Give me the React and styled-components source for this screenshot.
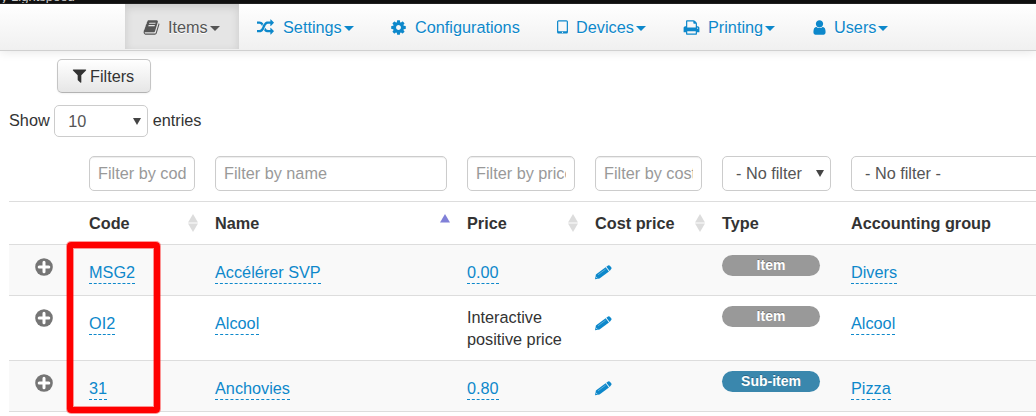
import React from 'react';
import styled, { createGlobalStyle, css } from 'styled-components';

const Global = createGlobalStyle`
  * { box-sizing: border-box; }
  body {
    margin: 0;
    background: #fff;
    color: #333;
    font: 16.25px/22px "Liberation Sans", Arial, sans-serif;
    overflow: hidden;
  }
`;

const paths = {
  book: 'M1703 478q40 57 18 129l-275 906q-19 64-76.5 107.5t-122.5 43.5h-923q-77 0-148.5-53.5t-99.5-131.5q-24-67-2-127 0-4 3-27t4-37q1-8-3-21.5t-3-19.5q2-11 8-21t16.5-23.5 16.5-23.5q23-38 45-91.5t30-91.5q3-10 .5-30t-.5-28q3-11 17-28t17-23q21-36 42-92t25-90q1-9-2.5-32t.5-28q4-13 22-30.5t22-22.5q19-26 42.5-84.5t27.5-96.5q1-8-3-25.5t-2-26.5q2-8 9-18t18-23 17-21q8-12 16.5-30.5t15-35 16-36 19.5-32 26.5-23.5 36-11.5 47.5 5.5l-1 3q38-9 51-9h761q74 0 114 56t18 130l-274 906q-36 119-71.5 153.5t-128.5 34.5h-869q-27 0-38 15-11 16-1 43 24 70 144 70h923q29 0 56-15.5t35-41.5l300-987q7-22 5-57 38 15 59 43zm-1064 2q-4 13 2 22.5t20 9.5h608q13 0 25.5-9.5t16.5-22.5l21-64q4-13-2-22.5t-20-9.5h-608q-13 0-25.5 9.5t-16.5 22.5zm-83 256q-4 13 2 22.5t20 9.5h608q13 0 25.5-9.5t16.5-22.5l21-64q4-13-2-22.5t-20-9.5h-608q-13 0-25.5 9.5t-16.5 22.5z',
  random: 'M666 481q-60 92-137 273-22-45-37-72.5t-40.5-63.5-51-56.5-63-35-81.5-14.5h-224q-14 0-23-9t-9-23v-192q0-14 9-23t23-9h224q250 0 410 225zm1126 799q0 14-9 23l-320 320q-9 9-23 9-13 0-22.5-9.5t-9.5-22.5v-192q-32 0-85 .5t-81 1-73-1-71-5-64-10.5-63-18.5-58-28.5-59-40-55-53.5-56-69.5q59-93 136-273 22 45 37 72.5t40.5 63.5 51 56.5 63 35 81.5 14.5h256v-192q0-14 9-23t23-9q12 0 24 10l319 319q9 9 9 23zm0-896q0 14-9 23l-320 320q-9 9-23 9-13 0-22.5-9.5t-9.5-22.5v-192h-256q-48 0-87 15t-69 45-51 61.5-45 77.5q-32 62-78 171-29 66-49.5 111t-54 105-64 100-74 83-90 68.5-106.5 42-128 16.5h-224q-14 0-23-9t-9-23v-192q0-14 9-23t23-9h224q48 0 87-15t69-45 51-61.5 45-77.5q32-62 78-171 29-66 49.5-111t54-105 64-100 74-83 90-68.5 106.5-42 128-16.5h256v-192q0-14 9-23t23-9q12 0 24 10l319 319q9 9 9 23z',
  cog: 'M1152 896q0-106-75-181t-181-75-181 75-75 181 75 181 181 75 181-75 75-181zm512-109v222q0 12-8 23t-20 13l-185 28q-19 54-39 91 35 50 107 138 10 12 10 25t-9 23q-27 37-99 108t-94 71q-12 0-26-9l-138-108q-44 23-91 38-16 136-29 186-7 28-36 28h-222q-14 0-24.5-8.5t-11.5-21.5l-28-184q-49-16-90-37l-141 107q-10 9-25 9-14 0-25-11-126-114-165-168-7-10-7-23 0-12 8-23 15-21 51-66.5t54-70.5q-27-50-41-99l-183-27q-13-2-21-12.5t-8-23.5v-222q0-12 8-23t19-13l186-28q14-46 39-92-40-57-107-138-10-12-10-24 0-10 9-23 26-36 98.5-107.5t94.5-71.5q13 0 26 10l138 107q44-23 91-38 16-136 29-186 7-28 36-28h222q14 0 24.5 8.5t11.5 21.5l28 184q49 16 90 37l142-107q9-9 24-9 13 0 25 10 129 119 165 170 7 8 7 22 0 12-8 23-15 21-51 66.5t-54 70.5q26 50 41 98l183 28q13 2 21 12.5t8 23.5z',
  tablet: 'M960 1408q0-26-19-45t-45-19-45 19-19 45 19 45 45 19 45-19 19-45zm384-160v-960q0-13-9.5-22.5t-22.5-9.5h-832q-13 0-22.5 9.5t-9.5 22.5v960q0 13 9.5 22.5t22.5 9.5h832q13 0 22.5-9.5t9.5-22.5zm128-960v1088q0 66-47 113t-113 47h-832q-66 0-113-47t-47-113v-1088q0-66 47-113t113-47h832q66 0 113 47t47 113z',
  print: 'M448 1536h896v-256h-896v256zm0-640h896v-384h-160q-40 0-68-28t-28-68v-160h-640v640zm1152 64q0-26-19-45t-45-19-45 19-19 45 19 45 45 19 45-19 19-45zm128 0v416q0 13-9.5 22.5t-22.5 9.5h-224v160q0 40-28 68t-68 28h-960q-40 0-68-28t-28-68v-160h-224q-13 0-22.5-9.5t-9.5-22.5v-416q0-79 56.5-135.5t135.5-56.5h64v-544q0-40 28-68t68-28h672q40 0 88 20t76 48l152 152q28 28 48 76t20 88v256h64q79 0 135.5 56.5t56.5 135.5z',
  user: 'M1536 1399q0 109-62.5 187t-150.5 78h-854q-88 0-150.5-78t-62.5-187q0-85 8.5-160.5t31.5-152 58.5-131 94-89 134.5-34.5q131 128 313 128t313-128q76 0 134.5 34.5t94 89 58.5 131 31.5 152 8.5 160.5zm-256-887q0 159-112.5 271.5t-271.5 112.5-271.5-112.5-112.5-271.5 112.5-271.5 271.5-112.5 271.5 112.5 112.5 271.5z',
  filter: 'M1595 295q17 41-14 70l-493 493v742q0 42-39 59-13 5-25 5-27 0-45-19l-256-256q-19-19-19-45v-486l-493-493q-31-29-14-70 17-39 59-39h1280q42 0 59 39z',
};

const Icon = styled.svg.attrs({ viewBox: '0 0 1792 1792' })`
  width: 17px;
  height: 17px;
  fill: currentColor;
  flex: none;
`;
const Glyph = ({ name }) => <Icon><path d={paths[name]} /></Icon>;

const Page = styled.div`width: 1036px; height: 416px; overflow: hidden;`;

const TopBar = styled.div`
  height: 4px;
  background: #111;
  border-bottom: 1px solid #222;
  color: #ccc;
  overflow: hidden;
  font-size: 13px;
  line-height: 16px;
  display: flex;
  align-items: flex-end;
`;

const TopText = styled.span`margin: 0 0 -2px 1px;`;

const NavBar = styled.nav`
  display: flex;
  height: 47px;
  padding-left: 125px;
  background: linear-gradient(#fff, #f0f0f0);
  border-bottom: 1px solid #d0d0d0;
  box-shadow: 0 1px 10px rgba(0, 0, 0, 0.1);
`;

const NavItem = styled.a`
  display: flex;
  align-items: center;
  height: 45px;
  width: ${(p) => p.$w}px;
  padding: 1px 0 0 18px;
  color: #0d88cb;
  text-shadow: 0 1px 0 #fff;
  ${(p) => p.$active && css`
    color: #555;
    background: #e5e5e5;
    box-shadow: inset 0 3px 8px rgba(0, 0, 0, 0.125);
  `}
`;

const NavLabel = styled.span`
  margin-left: ${(p) => p.$gap}px;
  padding-bottom: 1px;
`;

const Caret = styled.i`
  margin: 2px 0 0 2px;
  border: 5px solid transparent;
  border-top-color: currentColor;
  border-bottom: 0;
`;

const FilterButton = styled.button`
  display: flex;
  align-items: center;
  gap: 2px;
  width: 94px;
  height: 34px;
  margin: 8px 0 0 57px;
  padding: 0 0 1px 13px;
  border: 1px solid #c5c5c5;
  border-bottom-color: #b3b3b3;
  border-radius: 5px;
  background: linear-gradient(#fff, #e6e6e6);
  box-shadow: 0 1px 2px rgba(0, 0, 0, 0.05);
  color: #333;
  font: inherit;
`;

const LengthRow = styled.div`
  display: flex;
  align-items: center;
  gap: 4.5px;
  height: 32px;
  margin: 12px 0 0 9px;
`;

const LengthLabel = styled.span`padding-bottom: 2px;`;

const Box = styled.div`
  display: flex;
  align-items: center;
  height: ${(p) => p.$h ?? 35}px;
  width: ${(p) => p.$w}px;
  padding: 0 ${(p) => (p.$select ? '6px 0 13px' : '8px')};
  border: 1px solid #ccc;
  border-radius: 5px;
  background: #fff;
  color: ${(p) => (p.$select ? '#555' : '#999')};
  ${(p) => !p.$select && css`box-shadow: inset 0 1px 1px rgba(0, 0, 0, 0.075);`}
`;

const BoxText = styled.span`
  flex: 1;
  min-width: 0;
  overflow: hidden;
  white-space: nowrap;
  padding-bottom: ${(p) => p.$lift ?? 2}px;
`;

const DropMark = styled.i`
  border: solid transparent;
  border-width: 7px 4px 0;
  border-top-color: #444;
`;

const Table = styled.div`margin: 19px 0 0 9px; width: 1080px;`;

const Row = styled.div`
  display: grid;
  grid-template-columns: 80px 126px 252px 128px 127px 129px 238px;
  height: ${(p) => p.$h}px;
  border-bottom: 1px solid #ddd;
  background: ${(p) => (p.$odd ? '#f9f9f9' : '#fff')};
`;

const HeadCell = styled.div`
  position: relative;
  padding-top: 10px;
  font-weight: bold;
`;

const Sorter = styled.svg`
  position: absolute;
  top: 12px;
  right: 17px;
  width: 10px;
  height: 18px;
`;

const Cell = styled.div`padding-top: ${(p) => p.$top}px;`;

const Link = styled.a`
  display: inline-block;
  height: 23px;
  color: #0d88cb;
  border-bottom: 1px dashed #0d88cb;
`;

const PlusIcon = styled.svg`
  display: block;
  width: 18px;
  height: 18px;
  margin-left: 26px;
`;

const PencilIcon = styled.svg`
  display: block;
  width: 17px;
  height: 15px;
`;

const Badge = styled.div`
  width: 98px;
  height: 21px;
  border-radius: 11px;
  background: ${(p) => (p.$sub ? '#3a87ad' : '#999')};
  color: #fff;
  font-size: 14px;
  font-weight: bold;
  line-height: 20px;
  text-align: center;
  text-shadow: 0 -1px 0 rgba(0, 0, 0, 0.25);
`;

const Annotation = styled.div`
  position: absolute;
  left: 67px;
  top: 242px;
  width: 93px;
  height: 171px;
  border: 6px solid #f00;
  border-radius: 4px;
  box-shadow: 0 0 0 1px rgba(255, 0, 0, 0.4), inset 0 0 0 1px rgba(255, 0, 0, 0.4);
`;

const nav = [
  { icon: 'book', label: 'Items', w: 114, gap: 8, caret: true, active: true },
  { icon: 'random', label: 'Settings', w: 133, gap: 9, caret: true },
  { icon: 'cog', label: 'Configurations', w: 164, gap: 8 },
  { icon: 'tablet', label: 'Devices', w: 129, gap: 5, caret: true },
  { icon: 'print', label: 'Printing', w: 128, gap: 8, caret: true },
  { icon: 'user', label: 'Users', w: 120, gap: 6, caret: true },
];

const columns = [
  { label: 'Code', sort: 'both' },
  { label: 'Name', sort: 'asc' },
  { label: 'Price', sort: 'both' },
  { label: 'Cost price', sort: 'both' },
  { label: 'Type' },
  { label: 'Accounting group' },
];

const items = [
  { code: 'MSG2', name: 'Accélérer SVP', price: '0.00', type: 'Item', group: 'Divers', h: 51 },
  { code: 'OI2', name: 'Alcool', note: 'Interactive positive price', type: 'Item', group: 'Alcool', h: 65 },
  { code: '31', name: 'Anchovies', price: '0.80', type: 'Sub-item', group: 'Pizza', h: 51 },
];

const Plus = () => (
  <PlusIcon viewBox="0 0 18 18">
    <circle cx="9" cy="9" r="8.8" fill="#757575" />
    <path d="M9 4.2v9.6M4.2 9h9.6" stroke="#fff" strokeWidth="3" strokeLinecap="round" />
  </PlusIcon>
);

const Pencil = () => (
  <PencilIcon viewBox="0 0 17 15">
    <path d="M0 14.3l.9-4.9L10.6 2.2l3.4 4.3L4.500 13.600z" fill="#0d88cb" />
    <path d="M11.300 1.700l1.800-1.300q1-.6 1.800.3l1.300 1.600q.8 1.100-.2 1.900L14.700 5.900z" fill="#0d88cb" />
    <path d="M3 9.800l7.600-5.600" stroke="#fff" strokeWidth=".6" opacity=".55" />
    <path d="M1 11.800l1.300 1.500" stroke="#fff" strokeWidth=".6" />
  </PencilIcon>
);

export default function App() {
  return (
    <Page>
      <Global />
      <TopBar><TopText>y Lightspeed</TopText></TopBar>
      <NavBar>
        {nav.map((n) => (
          <NavItem key={n.label} $w={n.w} $active={n.active}>
            <Glyph name={n.icon} />
            <NavLabel $gap={n.gap}>{n.label}</NavLabel>
            {n.caret && <Caret />}
          </NavItem>
        ))}
      </NavBar>
      <FilterButton><Glyph name="filter" />Filters</FilterButton>
      <LengthRow>
        <LengthLabel>Show</LengthLabel>
        <Box $select $w={94} $h={32}><BoxText $lift={0}>10</BoxText><DropMark /></Box>
        <LengthLabel>entries</LengthLabel>
      </LengthRow>
      <Table>
        <Row $h={46}>
          <div />
          <Box $w={106}><BoxText>Filter by cod</BoxText></Box>
          <Box $w={232}><BoxText>Filter by name</BoxText></Box>
          <Box $w={108}><BoxText>Filter by price</BoxText></Box>
          <Box $w={107}><BoxText>Filter by cost</BoxText></Box>
          <Box $w={109} $select><BoxText>- No filter</BoxText><DropMark /></Box>
          <Box $w={220} $select><BoxText>- No filter -</BoxText></Box>
        </Row>
        <Row $h={43}>
          <div />
          {columns.map((c) => (
            <HeadCell key={c.label}>
              {c.label}
              {c.sort && (
                <Sorter viewBox="0 0 10 18">
                  <path d="M0 8.500L5 0 10 8.500z" fill={c.sort === 'asc' ? '#8080d8' : '#dcdcdc'} />
                  {c.sort === 'both' && <path d="M0 9.500h10L5 18z" fill="#dcdcdc" />}
                </Sorter>
              )}
            </HeadCell>
          ))}
        </Row>
        {items.map((it, i) => (
          <Row key={it.code} $h={it.h} $odd={i % 2 === 0}>
            <Cell $top={13}><Plus /></Cell>
            <Cell $top={16}><Link>{it.code}</Link></Cell>
            <Cell $top={16}><Link>{it.name}</Link></Cell>
            <Cell $top={it.note ? 10 : 16}>{it.note || <Link>{it.price}</Link>}</Cell>
            <Cell $top={20}><Pencil /></Cell>
            <Cell $top={10}><Badge $sub={it.type === 'Sub-item'}>{it.type}</Badge></Cell>
            <Cell $top={16}><Link>{it.group}</Link></Cell>
          </Row>
        ))}
      </Table>
      <Annotation />
    </Page>
  );
}
